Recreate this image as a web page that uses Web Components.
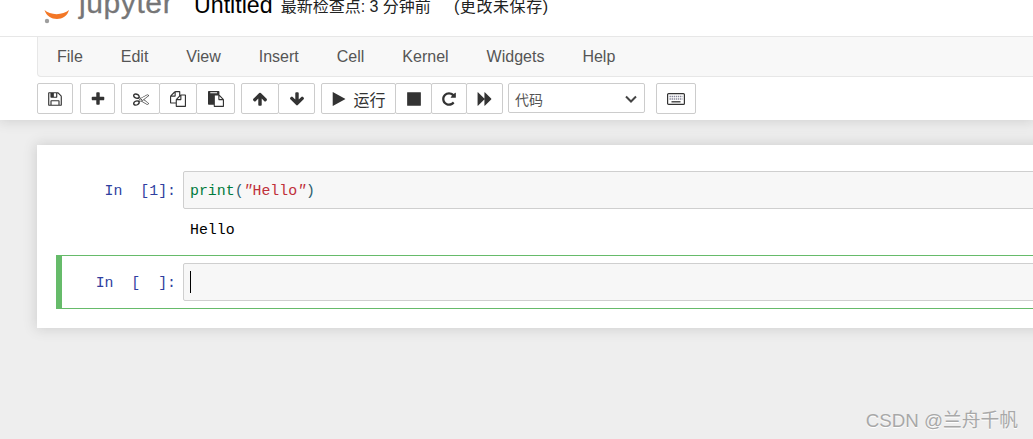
<!DOCTYPE html>
<html lang="zh">
<head>
<meta charset="utf-8">
<title>Untitled</title>
<style>
	html, body { margin: 0; height: 100%; overflow: hidden; background: #eee; }
	body { width: 1033px; height: 439px; position: relative; font-family: "Liberation Sans", "Noto Sans CJK SC", sans-serif; }
</style>
</head>
<body>
	<nb-top>
		<nb-header name="Untitled" checkpoint="最新检查点: 3 分钟前" status="(更改未保存)"></nb-header>
		<nb-menubar items="File,Edit,View,Insert,Cell,Kernel,Widgets,Help"></nb-menubar>
		<nb-toolbar></nb-toolbar>
	</nb-top>
	<nb-notebook>
		<nb-cell count="1" code output="Hello"></nb-cell>
		<nb-cell count=" " selected></nb-cell>
	</nb-notebook>
	<nb-watermark>CSDN @兰舟千帆</nb-watermark>

<script>
(() => {
	// ======
	// Icons.
	// ======

	const GLYPHS = {
		save: 'M512 1536h768v-384h-768v384zm896 0h128v-896q0-14-10-38.500t-20-34.500l-281-281q-10-10-34-20t-39-10v416q0 40-28 68t-68 28h-576q-40 0-68-28t-28-68v-416h-128v1280h128v-416q0-40 28-68t68-28h832q40 0 68 28t28 68v416zm-384-928v-320q0-13-9.500-22.500t-22.500-9.500h-192q-13 0-22.500 9.500t-9.500 22.500v320q0 13 9.500 22.500t22.500 9.500h192q13 0 22.500-9.500t9.500-22.500zm640 32v928q0 40-28 68t-68 28h-1344q-40 0-68-28t-28-68v-1344q0-40 28-68t68-28h928q40 0 88 20t76 48l280 280q28 28 48 76t20 88z',
		plus: 'M1600 736v192q0 40-28 68t-68 28h-416v416q0 40-28 68t-68 28h-192q-40 0-68-28t-28-68v-416h-416q-40 0-68-28t-28-68v-192q0-40 28-68t68-28h416v-416q0-40 28-68t68-28h192q40 0 68 28t28 68v416h416q40 0 68 28t28 68z',
		cut: 'M960 896q26 0 45 19t19 45-19 45-45 19-45-19-19-45 19-45 45-19zm300 64l507 398q28 20 25 56-5 35-35 51l-128 64q-13 7-29 7-17 0-31-8l-690-387-110 66q-8 4-12 5 14 49 10 97-7 77-56 147.500t-132 123.500q-132 84-277 84-136 0-222-78-90-84-79-207 7-76 56-147t131-124q132-84 278-84 83 0 151 31 9-13 22-22l122-73-122-73q-13-9-22-22-68 31-151 31-146 0-278-84-82-53-131-124t-56-147q-5-59 15.500-113t63.500-93q85-79 222-79 145 0 277 84 83 52 132 123t56 148q4 48-10 97 4 1 12 5l110 66 690-387q14-8 31-8 16 0 29 7l128 64q30 16 35 51 3 36-25 56zm-681-260q46-42 21-108t-106-117q-92-59-192-59-74 0-113 36-46 42-21 108t106 117q92 59 192 59 74 0 113-36zm-85 745q81-51 106-117t-21-108q-39-36-113-36-100 0-192 59-81 51-106 117t21 108q39 36 113 36 100 0 192-59zm178-613l96 58v-11q0-36 33-56l14-8-79-47-26 26q-3 3-10 11t-12 12q-2 2-4 3.500t-3 2.500zm224 224l96 32 736-576-128-64-768 431v113l-160 96 9 8q2 2 7 6 4 4 11 12t11 12l26 26zm704 416l128-64-520-408-177 138q-2 3-13 7z',
		copy: 'M1696 384q40 0 68 28t28 68v1216q0 40-28 68t-68 28h-960q-40 0-68-28t-28-68v-288h-544q-40 0-68-28t-28-68v-672q0-40 20-88t48-76l408-408q28-28 76-48t88-20h416q40 0 68 28t28 68v328q68-40 128-40h416zm-544 213l-299 299h299v-299zm-640-384l-299 299h299v-299zm196 647l316-316v-416h-384v416q0 40-28 68t-68 28h-416v640h512v-256q0-40 20-88t48-76zm956 804v-1152h-384v416q0 40-28 68t-68 28h-416v640h896z',
		paste: 'M768 1664h896v-640h-416q-40 0-68-28t-28-68v-416h-384v1152zm256-1440v-64q0-13-9.500-22.500t-22.500-9.500h-704q-13 0-22.500 9.500t-9.500 22.500v64q0 13 9.500 22.500t22.500 9.500h704q13 0 22.500-9.500t9.500-22.500zm256 672h299l-299-299v299zm512 128v672q0 40-28 68t-68 28h-960q-40 0-68-28t-28-68v-160h-544q-40 0-68-28t-28-68v-1344q0-40 28-68t68-28h1088q40 0 68 28t28 68v328q21 13 36 28l408 408q28 28 48 76t20 88z',
		up: 'M1675 971q0 51-37 90l-75 75q-38 38-91 38-54 0-90-38l-294-293v704q0 52-37.500 84.500t-90.500 32.500h-128q-53 0-90.500-32.500t-37.500-84.500v-704l-294 293q-36 38-90 38t-90-38l-75-75q-38-38-38-90 0-53 38-91l651-651q35-37 90-37 54 0 91 37l651 651q37 39 37 91z',
		down: 'M1675 832q0 53-37 90l-651 652q-39 37-91 37-53 0-90-37l-651-652q-38-36-38-90 0-53 38-91l74-75q39-37 91-37 53 0 90 37l294 294v-704q0-52 38-90t90-38h128q52 0 90 38t38 90v704l294-294q37-37 90-37 52 0 91 37l75 75q37 39 37 91z',
		play: 'M1576 927l-1328 738q-23 13-39.500 3t-16.500-36v-1472q0-26 16.500-36t39.500 3l1328 738q23 13 23 31t-23 31z',
		stop: 'M1664 192v1408q0 26-19 45t-45 19h-1408q-26 0-45-19t-19-45v-1408q0-26 19-45t45-19h1408q26 0 45 19t19 45z',
		redo: 'M1664 256v448q0 26-19 45t-45 19h-448q-42 0-59-40-17-39 14-69l138-138q-148-137-349-137-104 0-198.500 40.500t-163.500 109.500-109.500 163.500-40.500 198.500 40.500 198.500 109.500 163.500 163.500 109.500 198.500 40.500q119 0 225-52t179-147q7-10 23-12 15 0 25 9l137 138q9 8 9.500 20.500t-7.500 22.500q-109 132-264 204.500t-327 72.500q-156 0-298-61t-245-164-164-245-61-298 61-298 164-245 245-164 298-61q147 0 284.500 55.500t244.500 156.500l130-129q29-31 70-14 39 17 39 59z',
		fast: 'M109 1651q-19 19-32 13t-13-32v-1472q0-26 13-32t32 13l710 710q9 9 13 19v-710q0-26 13-32t32 13l710 710q19 19 19 45t-19 45l-710 710q-19 19-32 13t-13-32v-710q-4 10-13 19z',
	};

	const KEYBOARD = `
		<svg width="18" height="12" viewBox="0 0 18 12" aria-hidden="true">
			<rect x=".6" y=".6" width="16.800" height="10.800" rx="1" fill="none" stroke="#333" stroke-width="1.200"/>
			<path d="M2.500 3.500h13M2.500 6h13" stroke="#889" stroke-width="1.400" stroke-dasharray="1.400 .7" fill="none"/>
			<path d="M4.500 8.800h9" stroke="#333" stroke-width="1.300" fill="none"/>
		</svg>
	`;

	const icon = (name) => {
		if (name === 'keyboard') {
			return KEYBOARD;
		}
		return `<svg width="16" height="16" viewBox="0 0 1792 1792" aria-hidden="true"><path fill="#333" d="${GLYPHS[name]}"/></svg>`;
	};

	// ========
	// Helpers.
	// ========

	const define = (tag, css, html, setup) => {
		customElements.define(tag, class extends HTMLElement {
			constructor() {
				super();
				this.attachShadow({ mode: 'open' });
			}

			connectedCallback() {
				const body = typeof html === 'function' ? html(this) : html;
				this.shadowRoot.innerHTML = `<style>${css}</style>${body}`;
				if (setup) {
					setup(this);
				}
			}
		});
	};

	// =======
	// Header.
	// =======

	define('nb-top', `
		:host {
			display: block;
			height: 120px;
			background: #fff;
			box-shadow: 0 0 12px 1px rgba(87, 87, 87, 0.2);
			overflow: hidden;
		}
	`, '<slot></slot>');

	define('nb-header', `
		:host {
			display: flex;
			align-items: flex-end;
			height: 36px;
			padding-left: 44px;
			border-bottom: 1px solid #e7e7e7;
			overflow: hidden;
			font-family: "Liberation Sans", "Noto Sans CJK SC", sans-serif;
		}
		.logo { display: flex; align-items: flex-end; flex: none; width: 150px; height: 36px; }
		.logo svg { flex: none; margin-bottom: 12px; }
		.word { font-size: 30px; line-height: 36px; color: #767677; margin: 0 0 15px 9px; letter-spacing: .6px; -webkit-text-stroke: .3px #767677; }
		.name { font-size: 23.200px; line-height: 28px; color: #000; margin: 0 0 17px 0; }
		.check { font-size: 16px; line-height: 20px; color: #222; margin: 0 0 19px 8px; }
		.status { font-size: 16px; line-height: 20px; color: #222; margin: 0 0 19px 23px; letter-spacing: .6px; }
	`, (el) => `
		<div class="logo">
			<svg width="26" height="24" viewBox="0 0 26 24"><path d="M.5 10C6 15.500 19 15.500 25 10 22 22 4 22 .5 10z" fill="#f37726"/><circle cx="3" cy="21" r="2.200" fill="#9e9e9e"/></svg>
			<span class="word">jupyter</span>
		</div>
		<span class="name">${el.getAttribute('name')}</span>
		<span class="check">${el.getAttribute('checkpoint')}</span>
		<span class="status">${el.getAttribute('status')}</span>
	`);

	// =========
	// Menu bar.
	// =========

	define('nb-menubar', `
		:host {
			display: flex;
			align-items: center;
			gap: 38px;
			box-sizing: border-box;
			height: 40px;
			margin-left: 37px;
			padding-left: 19px;
			background: #f8f8f8;
			border: 1px solid #e7e7e7;
			border-top: 0;
			border-right: 0;
			border-radius: 0 0 0 4px;
			font: 16px "Liberation Sans", sans-serif;
			color: #555;
		}
	`, (el) => el.getAttribute('items').split(',').map((item) => `<span>${item}</span>`).join(''));

	// ========
	// Toolbar.
	// ========

	define('nb-btn', `
		:host {
			display: inline-flex;
			align-items: center;
			justify-content: center;
			gap: 6px;
			box-sizing: border-box;
			height: 31px;
			background: #fff;
			border: 1px solid #ccc;
			border-radius: 2px;
			margin-left: -1px;
			font: 16px "Liberation Sans", "Noto Sans CJK SC", sans-serif;
			color: #333;
		}
		:host(:first-child) { margin-left: 0; }
	`, (el) => `${icon(el.getAttribute('icon'))}<slot></slot>`, (el) => {
		el.style.width = `${el.getAttribute('w')}px`;
	});

	define('nb-group', `
		:host { display: inline-flex; }
	`, '<slot></slot>');

	define('nb-select', `
		:host {
			display: flex;
			align-items: center;
			justify-content: space-between;
			box-sizing: border-box;
			width: 137px;
			height: 30px;
			padding: 2px 7px 0 6px;
			background: #fff;
			border: 1px solid #ccc;
			border-radius: 2px;
			font: 14px "Noto Sans CJK SC", sans-serif;
			color: #555;
		}
		svg { flex: none; }
	`, (el) => `<span>${el.getAttribute('value')}</span><svg width="12" height="8" viewBox="0 0 12 8"><path d="M1 1.500 6 6.500 11 1.500" fill="none" stroke="#444" stroke-width="2"/></svg>`);

	define('nb-toolbar', `
		:host {
			display: flex;
			align-items: flex-start;
			height: 37px;
			padding: 6px 0 0 37px;
		}
		nb-group { margin-right: 5px; }
		.gap { margin-right: 6px; }
		.gapk { margin-right: 11px; }
	`, `
		<nb-group class="gap" style="margin-right:7px"><nb-btn icon="save" w="36"></nb-btn></nb-group>
		<nb-group class="gap"><nb-btn icon="plus" w="35"></nb-btn></nb-group>
		<nb-group class="gap"><nb-btn icon="cut" w="39"></nb-btn><nb-btn icon="copy" w="38"></nb-btn><nb-btn icon="paste" w="39"></nb-btn></nb-group>
		<nb-group class="gap"><nb-btn icon="up" w="38"></nb-btn><nb-btn icon="down" w="37"></nb-btn></nb-group>
		<nb-group><nb-btn icon="play" w="75">运行</nb-btn><nb-btn icon="stop" w="37"></nb-btn><nb-btn icon="redo" w="36"></nb-btn><nb-btn icon="fast" w="37"></nb-btn></nb-group>
		<nb-select class="gapk" value="代码"></nb-select>
		<nb-group><nb-btn icon="keyboard" w="40"></nb-btn></nb-group>
	`);

	// =========
	// Notebook.
	// =========

	define('nb-notebook', `
		:host {
			display: block;
			box-sizing: border-box;
			width: 1100px;
			height: 183px;
			margin: 25px 0 0 37px;
			padding: 19px 0 0 19px;
			background: #fff;
			box-shadow: 0 0 12px 1px rgba(87, 87, 87, 0.2);
		}
	`, '<slot></slot>');

	define('nb-cell', `
		:host {
			display: block;
			box-sizing: border-box;
			padding: 6px 0 7px 6px;
			border: 1px solid transparent;
			font: 14.880px/22px "Liberation Mono", monospace;
		}
		:host([selected]) {
			padding: 7px 0 7px 0;
			border-color: #66bb6a;
			border-left: 6px solid #66bb6a;
			border-right: 0;
		}
		.row { display: flex; }
		.prompt {
			box-sizing: border-box;
			flex: none;
			width: 120px;
			padding: 9px 7px 0 0;
			text-align: right;
			white-space: pre;
			color: #303f9f;
		}
		:host([selected]) .prompt { width: 121px; }
		.box {
			box-sizing: border-box;
			flex: 1;
			height: 38px;
			padding: 8px 6px 6px;
			background: #f7f7f7;
			border: 1px solid #cfcfcf;
			border-radius: 2px;
			white-space: pre;
			color: #333;
		}
		:host([selected]) .box { padding-top: 7px; }
		.kw { color: #007a3d; }
		.str { color: #c0303a; }
		.str i { font-style: italic; }
		.par { color: #2f5f70; }
		.cursor { display: block; width: 1px; height: 22px; background: #000; }
		.out { padding: 10px 0 6px 127px; color: #000; white-space: pre; }
	`, (el) => {
		const source = el.hasAttribute('code')
			? '<span class="kw">print</span><span class="par">(</span><span class="str"><i>"</i>Hello<i>"</i></span><span class="par">)</span>'
			: '<span class="cursor"></span>';
		const output = el.getAttribute('output');
		return `
			<div class="row">
				<div class="prompt">In  [${el.getAttribute('count')}${el.getAttribute('count') === ' ' ? ' ' : ''}]:</div>
				<div class="box">${source}</div>
			</div>
			${output ? `<div class="out">${output}</div>` : ''}
		`;
	});

	// ==========
	// Watermark.
	// ==========

	define('nb-watermark', `
		:host {
			display: block;
			position: absolute;
			right: 15px;
			bottom: 7px;
			font: 18.750px "Liberation Sans", "Noto Sans CJK SC", sans-serif;
			color: #a8a8a8;
			text-shadow: 0 1px 0 #fff;
		}
	`, '<slot></slot>');
})();
</script>
</body>
</html>
